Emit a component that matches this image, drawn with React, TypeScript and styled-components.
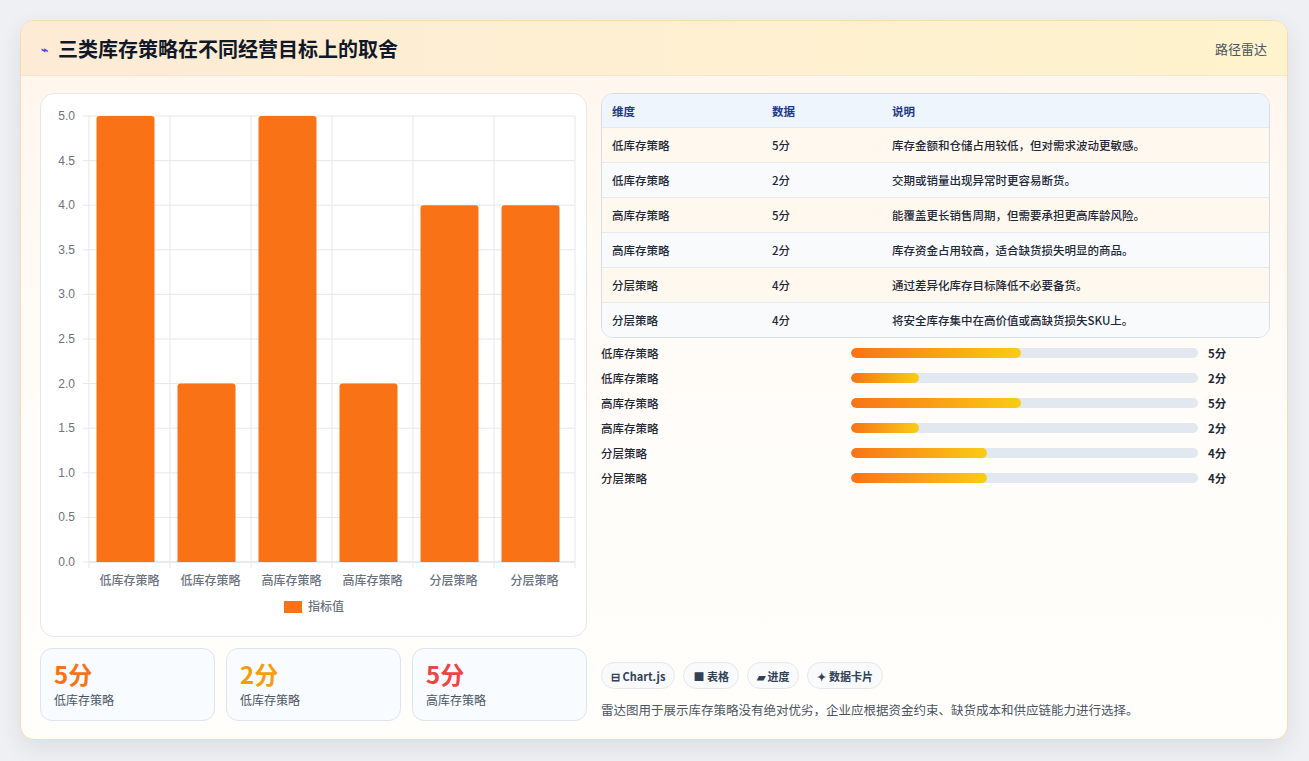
import React from "react";
import styled, { createGlobalStyle } from "styled-components";

const Global = createGlobalStyle`
  html, body { margin: 0; padding: 0; background: #eef0f3; }
  body { font-family: "Noto Sans CJK SC", "Noto Sans", sans-serif; color: #1f2937; }
`;

const rows = [
  { name: "低库存策略", value: 5, note: "库存金额和仓储占用较低，但对需求波动更敏感。" },
  { name: "低库存策略", value: 2, note: "交期或销量出现异常时更容易断货。" },
  { name: "高库存策略", value: 5, note: "能覆盖更长销售周期，但需要承担更高库龄风险。" },
  { name: "高库存策略", value: 2, note: "库存资金占用较高，适合缺货损失明显的商品。" },
  { name: "分层策略", value: 4, note: "通过差异化库存目标降低不必要备货。" },
  { name: "分层策略", value: 4, note: "将安全库存集中在高价值或高缺货损失SKU上。" },
];

const Page = styled.div`
  padding: 20px 21px 21px 20px;
  height: 761px;
  box-sizing: border-box;
`;

const Card = styled.div`
  height: 720px;
  box-sizing: border-box;
  border: 1px solid #f6dcb4;
  border-radius: 14px;
  background: linear-gradient(180deg, #fff6ec 0%, #fffdfa 60%, #fffefb 100%);
  box-shadow: 0 8px 24px rgba(0, 0, 0, 0.08);
  overflow: hidden;
  display: flex;
  flex-direction: column;
`;

const Header = styled.div`
  height: 55px;
  flex: none;
  box-sizing: border-box;
  display: flex;
  align-items: center;
  justify-content: space-between;
  padding: 0 20px;
  background: linear-gradient(90deg, #fdebd6 0%, #fef3cc 100%);
  border-bottom: 1px solid #f3e6d2;
`;

const Title = styled.h1`
  margin: 0;
  font-size: 20px;
  font-weight: 700;
  color: #111827;
  display: flex;
  align-items: center;
  gap: 10px;
`;

const Bolt = styled.span`
  font-size: 12px;
  color: #4f46e5;
`;

const Tag = styled.span`
  font-size: 13px;
  color: #4b5563;
`;

const Body = styled.div`
  flex: 1;
  display: grid;
  grid-template-columns: 547px 669px;
  gap: 14px;
  padding: 17px 19px 18px 19px;
`;

const Col = styled.div`
  display: flex;
  flex-direction: column;
  gap: 11px;
`;

const ChartBox = styled.div`
  height: 544px;
  box-sizing: border-box;
  background: #fff;
  border: 1px solid #e5e7eb;
  border-radius: 14px;
`;

const Stats = styled.div`
  display: grid;
  grid-template-columns: repeat(3, 1fr);
  gap: 11px;
`;

const Stat = styled.div`
  height: 73px;
  box-sizing: border-box;
  border: 1px solid #dbe4f0;
  border-radius: 12px;
  background: #f8fbff;
  padding: 10px 13px;
`;

const StatValue = styled.div<{ $color: string }>`
  font-size: 24px;
  font-weight: 700;
  line-height: 30px;
  color: ${(p) => p.$color};
`;

const StatLabel = styled.div`
  font-size: 12px;
  color: #4b5563;
  margin-top: 2px;
`;

const Table = styled.div`
  border: 1px solid #d6dde8;
  border-radius: 12px;
  overflow: hidden;
  background: #fff;
`;

const TRow = styled.div<{ $bg: string; $head?: boolean }>`
  display: grid;
  grid-template-columns: 160px 120px 1fr;
  height: ${(p) => (p.$head ? 33 : 35)}px;
  align-items: center;
  padding: 0 10px;
  font-size: 11.5px;
  background: ${(p) => p.$bg};
  color: ${(p) => (p.$head ? "#1e3a8a" : "#1f2937")};
  font-weight: ${(p) => (p.$head ? 700 : 500)};
  border-top: ${(p) => (p.$head ? "none" : "1px solid #e5eaf2")};
  box-sizing: border-box;
`;

const Bars = styled.div`
  display: flex;
  flex-direction: column;
  gap: 7px;
  margin-top: 6px;
`;

const BarRow = styled.div`
  display: grid;
  grid-template-columns: 250px 347px 1fr;
  align-items: center;
  height: 18px;
  font-size: 11.5px;
  font-weight: 500;
`;

const Track = styled.div`
  height: 10px;
  border-radius: 5px;
  background: #e2e8f0;
  overflow: hidden;
`;

const Fill = styled.div`
  height: 100%;
  border-radius: 5px;
  background: linear-gradient(90deg, #f97316, #facc15);
`;

const BarValue = styled.span`
  padding-left: 10px;
  font-weight: 700;
`;

const Spacer = styled.div`
  flex: 1;
`;

const Chips = styled.div`
  display: flex;
  gap: 8px;
`;

const Chip = styled.span`
  height: 27px;
  box-sizing: border-box;
  padding: 0 9px;
  border: 1px solid #e5e7eb;
  border-radius: 14px;
  background: #f8fafc;
  font-size: 11px;
  font-weight: 700;
  color: #334155;
  display: flex;
  align-items: center;
  gap: 4px;
`;

const Note = styled.p`
  margin: 11px 0 2px;
  font-size: 12.5px;
  color: #4b5563;
`;

const Chart = () => {
  const x0 = 48, y0 = 22, w = 486, h = 446;
  const step = w / 6;
  const ticks = Array.from({ length: 11 }, (_, i) => i * 0.5);
  return (
    <svg width="545" height="542" style={{ display: "block" }}>
      {ticks.map((t) => {
        const y = y0 + h - (t / 5) * h;
        return (
          <g key={t}>
            <line x1={x0} x2={x0 + w} y1={y} y2={y} stroke={t === 0 ? "#d1d5db" : "#e5e7eb"} />
            <line x1={x0 - 6} x2={x0} y1={y} y2={y} stroke="#e5e7eb" />
            <text x={x0 - 14} y={y + 4} fontSize="12" fill="#6b7280" textAnchor="end" fontFamily="Liberation Sans, sans-serif">
              {t.toFixed(1)}
            </text>
          </g>
        );
      })}
      {Array.from({ length: 7 }, (_, i) => (
        <line key={i} x1={x0 + i * step} x2={x0 + i * step} y1={y0} y2={y0 + h + 6} stroke="#e5e7eb" />
      ))}
      {rows.map((r, i) => {
        const bh = (r.value / 5) * h;
        const bx = x0 + i * step + 7.5;
        return (
          <g key={i}>
            <path
              d={`M${bx} ${y0 + h} V${y0 + h - bh + 3} Q${bx} ${y0 + h - bh} ${bx + 3} ${y0 + h - bh} H${bx + 55} Q${bx + 58} ${y0 + h - bh} ${bx + 58} ${y0 + h - bh + 3} V${y0 + h} Z`}
              fill="#f97316"
            />
            <text x={x0 + i * step + step / 2} y={y0 + h + 23} fontSize="12" fill="#6b7280" textAnchor="middle" fontWeight="500">
              {r.name}
            </text>
          </g>
        );
      })}
      <rect x="243" y="507" width="18" height="12" fill="#f97316" />
      <text x="267" y="517" fontSize="12" fill="#6b7280" fontWeight="500">指标值</text>
    </svg>
  );
};

export default function App() {
  return (
    <Page>
      <Global />
      <Card>
        <Header>
          <Title>
            <Bolt>⌁</Bolt>三类库存策略在不同经营目标上的取舍
          </Title>
          <Tag>路径雷达</Tag>
        </Header>
        <Body>
          <Col>
            <ChartBox>
              <Chart />
            </ChartBox>
            <Stats>
              <Stat>
                <StatValue $color="#f97316">5分</StatValue>
                <StatLabel>低库存策略</StatLabel>
              </Stat>
              <Stat>
                <StatValue $color="#f59e0b">2分</StatValue>
                <StatLabel>低库存策略</StatLabel>
              </Stat>
              <Stat>
                <StatValue $color="#ef4444">5分</StatValue>
                <StatLabel>高库存策略</StatLabel>
              </Stat>
            </Stats>
          </Col>
          <Col style={{ gap: 0 }}>
            <Table>
              <TRow $head $bg="#eef5fd">
                <span>维度</span>
                <span>数据</span>
                <span>说明</span>
              </TRow>
              {rows.map((r, i) => (
                <TRow key={i} $bg={i % 2 === 0 ? "#fff8ef" : "#f8fafc"}>
                  <span>{r.name}</span>
                  <span>{r.value}分</span>
                  <span>{r.note}</span>
                </TRow>
              ))}
            </Table>
            <Bars>
              {rows.map((r, i) => (
                <BarRow key={i}>
                  <span>{r.name}</span>
                  <Track>
                    <Fill style={{ width: `${r.value * 9.8}%` }} />
                  </Track>
                  <BarValue>{r.value}分</BarValue>
                </BarRow>
              ))}
            </Bars>
            <Spacer />
            <Chips>
              <Chip>⊟ Chart.js</Chip>
              <Chip>■ 表格</Chip>
              <Chip>▰ 进度</Chip>
              <Chip>✦ 数据卡片</Chip>
            </Chips>
            <Note>雷达图用于展示库存策略没有绝对优劣，企业应根据资金约束、缺货成本和供应链能力进行选择。</Note>
          </Col>
        </Body>
      </Card>
    </Page>
  );
}
